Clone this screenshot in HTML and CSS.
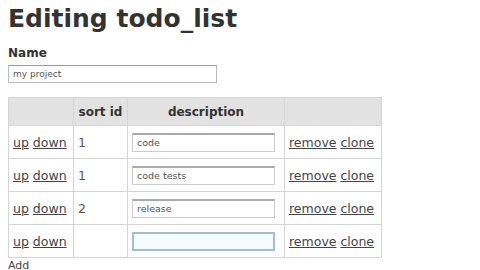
FILE: index.html
```html
<!DOCTYPE html>
<html lang="en">

<head>
  <meta charset="UTF-8">
  <title>Editing todo_list</title>
  <link rel="stylesheet" href="styles.css">
</head>

<body>
  <h1>Editing todo_list</h1>
  <form class="todo-form">
    <label for="name">Name</label>
    <input type="text" id="name" class="name-field" value="my project">

    <table class="items">
      <thead>
        <tr>
          <th class="col-move"></th>
          <th class="col-sort">sort id</th>
          <th class="col-desc">description</th>
          <th class="col-actions"></th>
        </tr>
      </thead>
      <tbody>
        <tr>
          <td><a href="#">up</a> <a href="#">down</a></td>
          <td>1</td>
          <td><input type="text" class="desc-field" value="code"></td>
          <td><a href="#">remove</a> <a href="#">clone</a></td>
        </tr>
        <tr>
          <td><a href="#">up</a> <a href="#">down</a></td>
          <td>1</td>
          <td><input type="text" class="desc-field" value="code tests"></td>
          <td><a href="#">remove</a> <a href="#">clone</a></td>
        </tr>
        <tr>
          <td><a href="#">up</a> <a href="#">down</a></td>
          <td>2</td>
          <td><input type="text" class="desc-field" value="release"></td>
          <td><a href="#">remove</a> <a href="#">clone</a></td>
        </tr>
        <tr>
          <td><a href="#">up</a> <a href="#">down</a></td>
          <td></td>
          <td><input type="text" class="desc-field focused" value=""></td>
          <td><a href="#">remove</a> <a href="#">clone</a></td>
        </tr>
      </tbody>
    </table>
    <a href="#" class="add-link">Add</a>
  </form>
</body>

</html>
```

FILE: styles.css
```css
body {
  font-family: "DejaVu Sans", Verdana, sans-serif;
  color: #444;
  background-color: #fff;
  margin: 0;
  padding: 0 8px;
}

h1 {
  font-size: 25px;
  font-weight: bold;
  color: #333;
  margin: 4px 0 12px;
  line-height: 30px;
}

.todo-form label {
  display: block;
  font-size: 12px;
  font-weight: bold;
  color: #333;
  line-height: 14px;
  margin-bottom: 5px;
}

.name-field {
  display: block;
  width: 209px;
  height: 18px;
  box-sizing: border-box;
  font-family: "DejaVu Sans", Verdana, sans-serif;
  font-size: 9px;
  color: #555;
  padding: 0 4px;
  border: 1px solid #bbb;
  border-top-color: #999;
  margin: 0 0 14px;
}

.items {
  border-collapse: collapse;
  width: 374px;
  font-size: 12.5px;
}

.items th,
.items td {
  border: 1px solid #d4d4d4;
  padding: 0 4px;
  text-align: left;
  white-space: nowrap;
  color: #555;
}

.items th {
  background-color: #e2e2e2;
  height: 27px;
  font-size: 12px;
  font-weight: bold;
  color: #333;
  text-align: center;
}

.items td {
  height: 32px;
}

.col-move {
  width: 56px;
}

.col-sort {
  width: 45px;
}

.col-desc {
  width: 148px;
}

.items a {
  color: #444;
}

.desc-field {
  width: 143px;
  height: 19px;
  box-sizing: border-box;
  font-family: "DejaVu Sans", Verdana, sans-serif;
  font-size: 9.5px;
  color: #555;
  padding: 0 4px;
  border: 1px solid #ccc;
  border-top: 2px solid #aaa;
}

.desc-field.focused {
  border: 2px solid #9fc0d4;
  background-color: #f6fbfd;
}

.add-link {
  display: block;
  font-size: 11px;
  color: #444;
  text-decoration: none;
  margin-top: 1px;
}
```
